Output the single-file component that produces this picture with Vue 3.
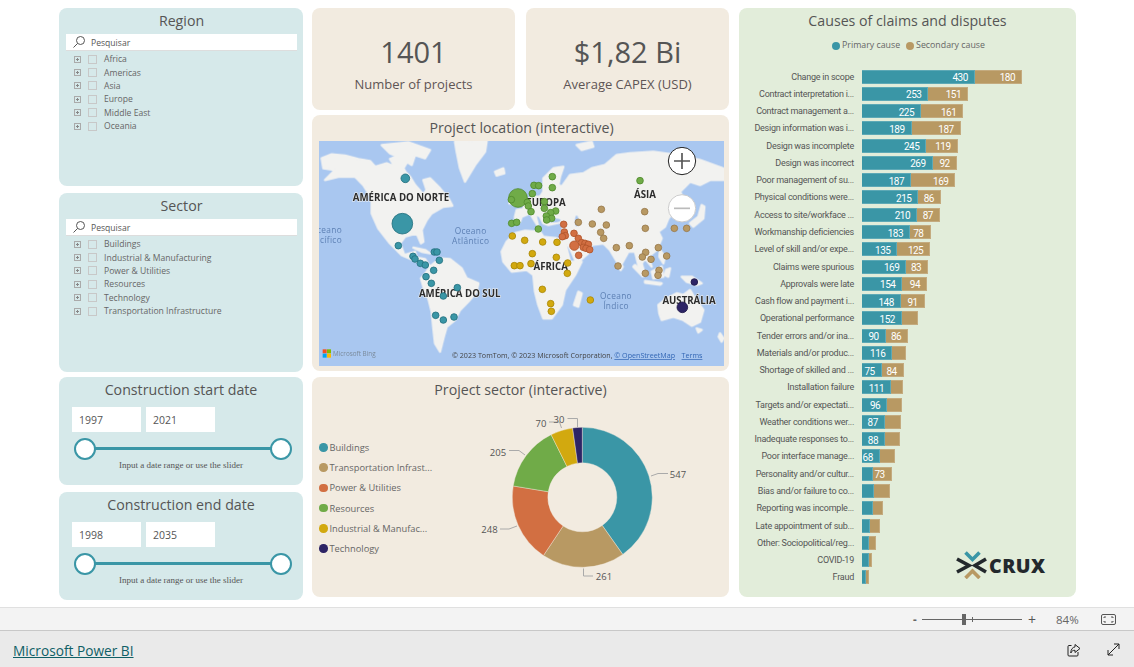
<script setup>
const regions = ['Africa', 'Americas', 'Asia', 'Europe', 'Middle East', 'Oceania']
const sectors = ['Buildings', 'Industrial & Manufacturing', 'Power & Utilities', 'Resources', 'Technology', 'Transportation Infrastructure']

const dateFilters = [
  { title: 'Construction start date', from: '1997', to: '2021' },
  { title: 'Construction end date', from: '1998', to: '2035' }
]

const causes = [
  ['Change in scope', 430, 180, true, true],
  ['Contract interpretation i...', 253, 151, true, true],
  ['Contract management a...', 225, 161, true, true],
  ['Design information was i...', 189, 187, true, true],
  ['Design was incomplete', 245, 119, true, true],
  ['Design was incorrect', 269, 92, true, true],
  ['Poor management of su...', 187, 169, true, true],
  ['Physical conditions were...', 215, 86, true, true],
  ['Access to site/workface ...', 210, 87, true, true],
  ['Workmanship deficiencies', 183, 78, true, true],
  ['Level of skill and/or expe...', 135, 125, true, true],
  ['Claims were spurious', 169, 83, true, true],
  ['Approvals were late', 154, 94, true, true],
  ['Cash flow and payment i...', 148, 91, true, true],
  ['Operational performance', 152, 61, true, false],
  ['Tender errors and/or ina...', 90, 86, true, true],
  ['Materials and/or produc...', 116, 52, true, false],
  ['Shortage of skilled and ...', 75, 84, true, true],
  ['Installation failure', 111, 45, true, false],
  ['Targets and/or expectati...', 96, 56, true, false],
  ['Weather conditions wer...', 87, 61, true, false],
  ['Inadequate responses to...', 88, 57, true, false],
  ['Poor interface manage...', 68, 57, true, false],
  ['Personality and/or cultur...', 40, 73, false, true],
  ['Bias and/or failure to co...', 47, 60, false, false],
  ['Reporting was incomple...', 43, 37, false, false],
  ['Late appointment of sub...', 32, 36, false, false],
  ['Other: Sociopolitical/reg...', 28, 24, false, false],
  ['COVID-19', 28, 10, false, false],
  ['Fraud', 15, 12, false, false]
]
const barScale = 0.2625

const donutData = [
  { name: 'Buildings', value: 547, color: '#3a96a6' },
  { name: 'Transportation Infrast...', value: 261, color: '#b89963' },
  { name: 'Power & Utilities', value: 248, color: '#d26f42' },
  { name: 'Resources', value: 205, color: '#70ab48' },
  { name: 'Industrial & Manufac...', value: 70, color: '#d2a90f' },
  { name: 'Technology', value: 30, color: '#2d2465' }
]

const cx = 582.3
const cy = 497.3
const total = donutData.reduce((s, d) => s + d.value, 0)
const point = (r, a) => `${(cx + r * Math.sin(a)).toFixed(2)} ${(cy - r * Math.cos(a)).toFixed(2)}`
let angle = 0
const slices = donutData.map((d) => {
  const start = angle
  angle += (d.value / total) * Math.PI * 2
  const large = angle - start > Math.PI ? 1 : 0
  return {
    color: d.color,
    path: `M${point(70, start)} A70 70 0 ${large} 1 ${point(70, angle)} L${point(34.5, angle)} A34.5 34.5 0 ${large} 0 ${point(34.5, start)} Z`
  }
})

const leaders = [
  { text: '547', x: 678, y: 478, line: '651,476 658,473.5 668,473.5' },
  { text: '261', x: 604, y: 580, line: '583.5,568.5 583.5,576 593,576' },
  { text: '248', x: 489.5, y: 533, line: '517,526 509,529 500,529' },
  { text: '205', x: 498, y: 455.5, line: '525,455 519,450.5 509,450.5' },
  { text: '70', x: 541, y: 426.5, line: '561.5,428 559.5,422 549,422' },
  { text: '30', x: 559, y: 423, line: '577.5,427 577.5,418.5 567.5,418.5' }
]

// map coordinates are 3x page pixels, offset so that x = (page - 315) * 3
const pinGroups = [
  { color: '#3a96a6', stroke: '#23707e', pins: [
    [271, 130, 13], [262, 266, 31], [250, 332, 10], [358, 351, 10], [366, 351, 10], [294, 364, 10],
    [300, 372, 10], [316, 385, 10], [331, 390, 10], [373, 376, 10], [356, 406, 10], [333, 425, 10],
    [349, 445, 10], [427, 458, 10], [385, 483, 10], [362, 541, 10], [385, 555, 10], [417, 546, 10]
  ] },
  { color: '#70ab48', stroke: '#4f8a2c', pins: [
    [609, 189, 28], [589, 194, 10], [590, 265, 10], [605, 262, 10], [712, 125, 10], [657, 151, 10],
    [671, 152, 10], [712, 158, 10], [652, 176, 10], [637, 202, 10], [640, 213, 10], [688, 200, 10],
    [688, 220, 10], [648, 230, 10], [722, 228, 10], [707, 233, 10], [694, 243, 10], [710, 250, 10],
    [695, 255, 10], [670, 282, 10], [975, 137, 10]
  ] },
  { color: '#d2a90f', stroke: '#a98807', pins: [
    [592, 303, 10], [629, 316, 10], [598, 392, 10], [615, 392, 10], [683, 321, 10], [726, 322, 10],
    [652, 356, 10], [724, 367, 10], [648, 386, 10], [758, 384, 10], [757, 415, 10], [682, 463, 10],
    [707, 506, 10], [709, 529, 10], [826, 495, 10]
  ] },
  { color: '#d26f42', stroke: '#b0542a', pins: [
    [746, 268, 10], [748, 291, 10], [751, 302, 10], [742, 305, 10], [777, 295, 10], [790, 310, 10],
    [800, 323, 10], [778, 332, 14], [810, 325, 10], [820, 328, 10], [805, 337, 10], [813, 340, 10],
    [824, 344, 10], [791, 361, 10]
  ] },
  { color: '#b89963', stroke: '#97784a', pins: [
    [859, 223, 10], [989, 230, 10], [790, 262, 10], [832, 267, 10], [874, 270, 10], [991, 280, 10],
    [1078, 280, 10], [1115, 280, 10], [857, 292, 10], [866, 310, 10], [904, 338, 10], [943, 332, 10],
    [1030, 338, 10], [992, 352, 10], [982, 366, 10], [1008, 373, 10], [1055, 363, 10], [909, 393, 10],
    [991, 415, 10], [1032, 406, 10], [1029, 421, 10]
  ] },
  { color: '#2d2465', stroke: '#1d1748', pins: [[1138, 441, 10], [1102, 517, 16]] }
]
</script>

<template>
  <div class="page">
    <div class="report">
      <div class="col col-left">
        <section class="panel teal slicer">
          <h2>Region</h2>
          <div class="search">
            <svg width="14" height="14" viewBox="0 0 14 14"><circle cx="8.5" cy="5.5" r="4" fill="none" stroke="#555" /><path d="M5.6 8.4 1.5 12.5" stroke="#555" fill="none" /></svg>
            <span>Pesquisar</span>
          </div>
          <ul>
            <li v-for="r in regions" :key="r"><i class="expander"></i><i class="check"></i>{{ r }}</li>
          </ul>
        </section>

        <section class="panel teal slicer sector-slicer">
          <h2>Sector</h2>
          <div class="search">
            <svg width="14" height="14" viewBox="0 0 14 14"><circle cx="8.5" cy="5.5" r="4" fill="none" stroke="#555" /><path d="M5.6 8.4 1.5 12.5" stroke="#555" fill="none" /></svg>
            <span>Pesquisar</span>
          </div>
          <ul>
            <li v-for="s in sectors" :key="s"><i class="expander"></i><i class="check"></i>{{ s }}</li>
          </ul>
        </section>

        <section v-for="d in dateFilters" :key="d.title" class="panel teal date">
          <h2>{{ d.title }}</h2>
          <div class="date-inputs">
            <div>{{ d.from }}</div>
            <div>{{ d.to }}</div>
          </div>
          <div class="slider"><b></b><b></b></div>
          <p>Input a date range or use the slider</p>
        </section>
      </div>

      <div class="col col-mid">
        <div class="kpis">
          <section class="panel sand kpi">
            <strong>1401</strong>
            <span>Number of projects</span>
          </section>
          <section class="panel sand kpi">
            <strong>$1,82 Bi</strong>
            <span>Average CAPEX (USD)</span>
          </section>
        </div>

        <section class="panel sand map-panel">
          <h2>Project location (interactive)</h2>
          <svg class="map" viewBox="12 18 1215 675" width="405" height="225">
            <rect x="12" y="18" width="1215" height="675" fill="#a9c7f0" />
            <g class="land" fill="#f2f2f0" stroke="#f2f2f0" stroke-width="7" stroke-linejoin="round">
              <path d="M20 70 50 58 90 62 130 72 165 78 180 95 215 85 240 95 225 72 250 62 280 75 265 100 272 112 285 125 300 150 325 178 335 165 325 135 345 130 375 160 400 190 412 212 385 215 350 235 335 255 320 285 325 320 318 325 305 295 270 305 255 325 268 360 300 350 305 368 330 372 345 395 325 385 295 375 260 360 225 325 190 280 170 235 170 190 145 150 120 125 70 125 30 135 60 105 25 100Z" />
              <path d="M200 30 280 22 345 45 330 70 300 60 290 90 260 70 225 55Z" />
              <path d="M420 20 515 18 510 50 480 90 450 140 435 100 425 50Z" />
              <path d="M540 110 565 100 568 115 545 122Z" />
              <path d="M295 338 330 345 345 355 320 350Z" />
              <path d="M345 395 375 370 405 372 440 400 455 430 490 445 485 470 460 500 435 525 420 555 395 575 385 610 375 650 360 625 355 580 350 530 340 490 325 455 318 430 335 410Z" />
              <g transform="translate(615 0)">
                <path d="M-15 245-10 225 10 222 15 200 40 185 60 185 70 170 70 130 100 100 130 95 120 125 115 150 125 155 150 120 190 115 215 100 255 90 290 60 330 55 400 50 470 60 540 75 610 100 610 135 570 135 540 150 510 140 480 170 490 190 465 225 445 250 435 275 415 290 425 310 410 345 385 365 395 395 375 370 365 385 375 420 355 390 345 350 325 350 300 395 270 345 250 325 215 330 210 350 170 385 150 340 135 315 125 300 130 270 120 262 85 270 70 265 60 245 45 235 55 275 30 235 5 245 0 260-15 262Z" />
                <path d="M-55 350-40 320-15 295 15 287 60 290 70 305 110 310 135 320 150 380 185 380 165 420 135 465 125 510 95 550 70 550 55 510 45 470 40 420 20 405-25 410-50 380Z" />
                <path d="M-20 180 0 175 5 205-15 210Z" />
                <path d="M-30 195-18 192-20 205-32 205Z" />
                <path d="M415 510 440 490 470 475 490 480 510 465 525 490 550 525 540 560 515 572 490 555 460 545 425 555 418 535Z" />
                <path d="M485 425 515 425 545 445 530 450 500 440Z" />
                <path d="M395 410 425 395 430 425 400 430Z" />
                <path d="M345 390 375 420 368 424 340 395Z" />
                <path d="M375 438 425 445 420 449 375 443Z" />
                <path d="M438 405 450 400 445 425 435 420Z" />
                <path d="M420 345 435 365 430 385 418 365Z" />
                <path d="M510 265 535 245 545 210 553 215 550 250 520 275Z" />
                <path d="M300 385 308 395 302 405 296 395Z" />
                <path d="M175 470 185 475 175 515 162 510Z" />
                <path d="M600 595 610 610 605 620 596 605Z" />
                <path d="M170 30 215 20 220 35 185 45Z" />
                <path d="M530 580 545 585 535 592Z" />
                <ellipse cx="100" cy="256" rx="22" ry="6" fill="#a9c7f0" stroke="none" />
                <ellipse cx="170" cy="258" rx="5" ry="16" fill="#a9c7f0" stroke="none" />
              </g>
            </g>
            <g class="map-water">
              <text x="81" y="294" text-anchor="end">Oceano</text>
              <text x="81" y="324" text-anchor="end">Pacífico</text>
              <text x="467" y="298" text-anchor="middle">Oceano</text>
              <text x="467" y="328" text-anchor="middle">Atlântico</text>
              <text x="903" y="491" text-anchor="middle">Oceano</text>
              <text x="903" y="521" text-anchor="middle">Índico</text>
            </g>
            <g class="map-labels">
              <text x="258" y="198" text-anchor="middle">AMÉRICA DO NORTE</text>
              <text x="434" y="487" text-anchor="middle">AMÉRICA DO SUL</text>
              <text x="693" y="214" text-anchor="middle">EUROPA</text>
              <text x="990" y="188" text-anchor="middle">ÁSIA</text>
              <text x="707" y="406" text-anchor="middle">ÁFRICA</text>
              <text x="1122" y="506" text-anchor="middle">AUSTRÁLIA</text>
            </g>
            <g v-for="g in pinGroups" :key="g.color" :fill="g.color" :stroke="g.stroke" stroke-width="2.5">
              <circle v-for="(p, i) in g.pins" :key="i" :cx="p[0]" :cy="p[1]" :r="p[2]" />
            </g>
            <g>
              <rect x="23" y="643" width="12" height="12" fill="#f25022" />
              <rect x="36" y="643" width="12" height="12" fill="#7fba00" />
              <rect x="23" y="656" width="12" height="12" fill="#00a4ef" />
              <rect x="36" y="656" width="12" height="12" fill="#ffb900" />
              <text class="map-bing" x="54" y="663">Microsoft Bing</text>
              <text class="map-small" x="411" y="669" fill="#444">© 2023 TomTom, © 2023 Microsoft Corporation, <tspan fill="#3367b5" text-decoration="underline">© OpenStreetMap</tspan>  <tspan fill="#3367b5" text-decoration="underline" dx="14">Terms</tspan></text>
            </g>
            <g stroke="#222" stroke-width="3">
              <circle cx="1101" cy="78" r="41" fill="#fff" />
              <path d="M1077 78h48M1101 54v48" stroke="#555" stroke-width="5" fill="none" />
            </g>
            <circle cx="1101" cy="220" r="41" fill="#fff" stroke="#ccc" stroke-width="3" />
            <path d="M1077 220h48" stroke="#bbb" stroke-width="5" />
          </svg>
        </section>

        <section class="panel sand sector-panel">
          <h2>Project sector (interactive)</h2>
          <div class="sector-body">
            <ul class="donut-legend">
              <li v-for="d in donutData" :key="d.name"><i :style="{ background: d.color }"></i>{{ d.name }}</li>
            </ul>
            <svg viewBox="440 403 289 194" width="289" height="194">
              <path v-for="s in slices" :key="s.color" :d="s.path" :fill="s.color" stroke="#f2ebe0" stroke-width="0.4" />
              <g v-for="l in leaders" :key="l.text">
                <polyline :points="l.line" fill="none" stroke="#aaa" stroke-width="1" />
                <text :x="l.x" :y="l.y" text-anchor="middle" class="donut-label">{{ l.text }}</text>
              </g>
            </svg>
          </div>
        </section>
      </div>

      <section class="panel green causes">
        <h2>Causes of claims and disputes</h2>
        <div class="causes-legend">
          <span><i class="primary"></i>Primary cause</span>
          <span><i class="secondary"></i>Secondary cause</span>
        </div>
        <div class="bars">
          <div v-for="c in causes" :key="c[0]" class="bar-row">
            <label>{{ c[0] }}</label>
            <div class="bar">
              <div class="seg primary" :style="{ width: c[1] * barScale + 'px' }"><span v-if="c[3]">{{ c[1] }}</span></div>
              <div class="seg secondary" :style="{ width: c[2] * barScale + 'px' }"><span v-if="c[4]">{{ c[2] }}</span></div>
            </div>
          </div>
        </div>
        <div class="logo">
          <svg width="31" height="28" viewBox="0 0 31 28" fill="none" stroke-width="3.6">
            <path d="M9.500 1.500 16.500 8.500 23.500 1.500" stroke="#3a96a6" />
            <path d="M9.500 27 16.500 20 23.500 27" stroke="#b89963" />
            <path d="M1 8 13 14.500 1 21" stroke="#23282c" />
            <path d="M30 8 19 14.500 30 21" stroke="#23282c" />
          </svg>
          <span>CRUX</span>
        </div>
      </section>
    </div>

    <div class="zoom-bar">
      <span class="minus">-</span>
      <div class="zoom-track"><b></b><i></i></div>
      <span class="plus">+</span>
      <span class="percent">84%</span>
      <svg width="15" height="11" viewBox="0 0 15 11" fill="none" stroke="#555"><rect x="0.500" y="0.500" width="14" height="10" rx="1.500" /><path d="M3 4V3h2M12 4V3h-2M3 7v1h2M12 7v1h-2" /></svg>
    </div>

    <div class="footer">
      <a>Microsoft Power BI</a>
      <div class="footer-icons">
        <svg width="14" height="14" viewBox="0 0 14 14" fill="none" stroke="#222"><path d="M4.500 2.500H2Q1 2.500 1 3.500v8.500q0 1 1 1h8q1 0 1-1V9" /><path d="M8 1.500 13 5.500 8 9.500V7.300C6 7.200 4.700 8 3.800 10 3.800 6.500 5.500 4.200 8 3.900Z" /></svg>
        <svg width="13" height="13" viewBox="0 0 13 13" fill="none" stroke="#222"><path d="M1 12 12 1M7 1h5v5M1 7v5h5" /></svg>
      </div>
    </div>
  </div>
</template>

<style>
html, body {
  background: #fff;
}
</style>

<style scoped>
.page {
  width: 1134px;
  height: 667px;
  overflow: hidden;
  font-family: "Open Sans", "Liberation Sans", sans-serif;
  color: #555;
}

.report {
  height: 599px;
  padding: 8px 0 0 59px;
  display: flex;
  align-items: flex-start;
}

.col {
  display: flex;
  flex-direction: column;
}

.col-left {
  width: 244px;
  margin-right: 9px;
}

.col-mid {
  width: 417px;
  margin-right: 10px;
}

.panel {
  border-radius: 8px;
  box-sizing: border-box;
}

.teal { background: #d6e9ea; }
.sand { background: #f2ebe0; }
.green { background: #e2edda; }

h2 {
  margin: 0;
  font-size: 14.2px;
  font-weight: 400;
  line-height: 26px;
  text-align: center;
  color: #555;
}

.slicer {
  height: 178px;
  padding: 0 6px 0 7px;
  margin-bottom: 7px;
}

.sector-slicer {
  height: 179px;
  margin-bottom: 5px;
}

.search {
  display: flex;
  align-items: center;
  height: 17px;
  box-sizing: border-box;
  background: #fff;
  border-bottom: 1px solid #ddd;
  font-size: 8.6px;
  padding-left: 6px;
  color: #555;
}

.search svg {
  margin-right: 5px;
}

.search span {
  padding-top: 2px;
}

.slicer ul {
  list-style: none;
  margin: 1.500px 0 0;
  padding: 0 0 0 8px;
}

.slicer li {
  display: flex;
  align-items: center;
  height: 13.400px;
  font-size: 8.6px;
  color: #666;
}

.expander {
  position: relative;
  box-sizing: border-box;
  width: 7px;
  height: 7px;
  border: 1px solid #aaa;
  margin-right: 7px;
  flex: none;
}

.expander::before {
  content: "";
  position: absolute;
  left: 1px;
  top: 2px;
  width: 3px;
  height: 1px;
  background: #888;
}

.expander::after {
  content: "";
  position: absolute;
  left: 2px;
  top: 1px;
  width: 1px;
  height: 3px;
  background: #888;
}

.check {
  box-sizing: border-box;
  width: 9px;
  height: 9px;
  border: 1px solid #c8c8c8;
  margin-right: 7px;
  flex: none;
}

.date {
  height: 108px;
  padding: 0 13px;
  margin-bottom: 7px;
}

.date-inputs {
  display: flex;
  gap: 5px;
  margin-top: 4px;
}

.date-inputs div {
  width: 69px;
  height: 25px;
  box-sizing: border-box;
  background: #fff;
  font-size: 10.5px;
  line-height: 27px;
  padding-left: 7px;
  color: #555;
}

.slider {
  position: relative;
  height: 3px;
  background: #3a96a6;
  margin: 15px 9px 0 13px;
}

.slider b {
  position: absolute;
  top: -9.500px;
  width: 22px;
  height: 22px;
  box-sizing: border-box;
  border: 2px solid #3a96a6;
  border-radius: 50%;
  background: #fff;
}

.slider b:first-child { left: -11px; }
.slider b:last-child { right: -11px; }

.date p {
  margin: 10px 0 0;
  font-family: "Liberation Serif", serif;
  font-size: 9px;
  line-height: 11px;
  text-align: center;
  color: #555;
}

.kpis {
  display: flex;
  gap: 11px;
  margin-bottom: 5px;
}

.kpi {
  width: 203px;
  height: 102px;
  display: flex;
  flex-direction: column;
  align-items: center;
  padding-top: 22px;
}

.kpi strong {
  font-size: 29px;
  font-weight: 400;
  line-height: 44px;
  color: #555;
}

.kpi span {
  font-size: 13px;
  font-weight: 500;
  line-height: 18px;
  margin-top: 1px;
  color: #5e5555;
}

.map-panel {
  height: 256px;
  padding-left: 7px;
  margin-bottom: 6px;
}

.map-panel h2 {
  margin-left: -7px;
  padding-left: 2px;
}

.map {
  display: block;
}

.land {
  filter: blur(0.6px);
}

.map-water text {
  font-size: 25px;
  fill: #5d80b4;
  letter-spacing: 1px;
}

.map-labels text {
  font-size: 29px;
  font-weight: 700;
  fill: #2c2c2c;
  stroke: #f2f2f0;
  stroke-width: 3px;
  paint-order: stroke;
}

.map-small {
  font-size: 21.400px;
}

.map-bing {
  font-size: 19px;
  fill: #7a8a9a;
}

.sector-panel {
  height: 220px;
}

.sector-body {
  display: flex;
  align-items: center;
  height: 194px;
}

.donut-legend {
  list-style: none;
  width: 128px;
  margin: 0;
  padding: 0 0 4px 7px;
  box-sizing: border-box;
}

.donut-legend li {
  display: flex;
  align-items: center;
  height: 20.2px;
  font-size: 9.3px;
  white-space: nowrap;
  color: #666;
}

.donut-legend i {
  width: 8.500px;
  height: 8.500px;
  border-radius: 50%;
  margin-right: 2px;
  flex: none;
}

.donut-label {
  font-size: 9.5px;
  fill: #555;
}

.causes {
  position: relative;
  width: 337px;
  height: 589px;
}

.causes-legend {
  display: flex;
  justify-content: center;
  gap: 6px;
  font-size: 8.800px;
  line-height: 13px;
  margin-top: 5px;
  padding-left: 2px;
  color: #666;
}

.causes-legend span {
  display: flex;
  align-items: center;
}

.causes-legend i {
  width: 8px;
  height: 8px;
  border-radius: 50%;
  margin-right: 2px;
}

.causes-legend .primary { background: #3a96a6; }
.causes-legend .secondary { background: #b89963; }

.bars {
  margin-top: 16px;
}

.bar-row {
  display: flex;
  align-items: center;
  height: 17.28px;
}

.bar-row label {
  width: 115px;
  margin-right: 8px;
  font-family: Roboto, "Open Sans", sans-serif;
  font-size: 9px;
  letter-spacing: -0.25px;
  text-align: right;
  white-space: nowrap;
  color: #555;
}

.bar {
  display: flex;
  height: 14px;
}

.seg {
  box-sizing: border-box;
  display: flex;
  justify-content: flex-end;
  align-items: center;
  border: 1px solid rgba(255, 255, 255, 0.18);
  border-left: 0;
  color: #fff;
  font-family: Roboto, "Open Sans", sans-serif;
  font-size: 10px;
  letter-spacing: -0.5px;
}

.seg span {
  padding-top: 2px;
  margin-right: 6px;
}

.seg.primary { background: #3a96a6; }
.seg.secondary { background: #b89963; }

.logo {
  position: absolute;
  left: 217px;
  top: 543px;
  display: flex;
  align-items: center;
  gap: 2px;
}

.logo span {
  font-size: 19.500px;
  font-weight: 800;
  color: #23282c;
  letter-spacing: 0.5px;
}

.zoom-bar {
  display: flex;
  align-items: center;
  height: 24px;
  box-sizing: border-box;
  background: #f3f3f3;
  border-top: 1px solid #e0e0e0;
  border-bottom: 1px solid #c8c8c8;
  padding-left: 913px;
  font-size: 11.5px;
  color: #666;
}

.minus {
  width: 9px;
  font-weight: 700;
}

.zoom-track {
  position: relative;
  width: 100px;
  height: 1px;
  background: #666;
}

.zoom-track b {
  position: absolute;
  left: 40px;
  top: -5px;
  width: 4px;
  height: 11px;
  background: #666;
}

.zoom-track i {
  position: absolute;
  left: 50px;
  top: -2px;
  width: 1px;
  height: 5px;
  background: #666;
}

.plus {
  margin-left: 6px;
  width: 28px;
  font-size: 14px;
  color: #555;
}

.percent {
  width: 45px;
}

.footer {
  display: flex;
  justify-content: space-between;
  align-items: center;
  height: 37px;
  background: #eaeaea;
  padding: 0 14px 0 13px;
}

.footer a {
  padding-top: 2px;
  font-size: 13.700px;
  color: #0f5f66;
  text-decoration: underline;
}

.footer-icons {
  display: flex;
  gap: 26px;
}
</style>
